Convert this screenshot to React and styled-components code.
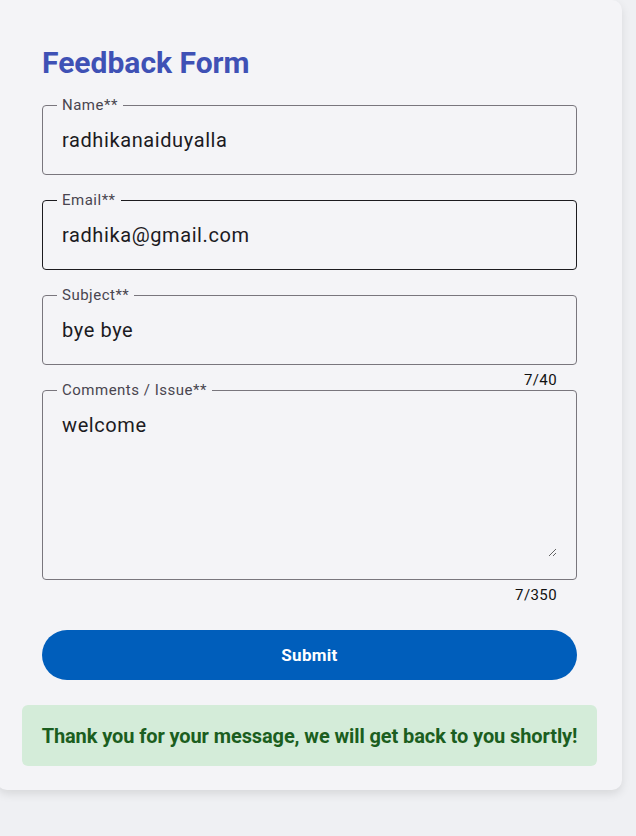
import React from 'react';
import styled, {createGlobalStyle} from 'styled-components';

const GlobalStyle = createGlobalStyle`
    html, body {
        margin: 0;
        padding: 0;
        background: #eff0f3;
        font-family: Roboto, "Liberation Sans", sans-serif;
    }
`

const Page = styled.div`
    width: 636px;
    min-height: 836px;
    overflow: hidden;
`
const Card = styled.div`
    width: 625px;
    margin-left: -3px;
    box-sizing: border-box;
    padding: 42px 45px 24px;
    background: #f4f4f7;
    border-radius: 0 10px 10px 10px;
    box-shadow: 0 4px 10px rgba(0, 0, 0, 0.1);
`
const Title = styled.h1`
    margin: 0 0 12px;
    font-size: 30px;
    line-height: 42px;
    font-weight: 700;
    color: #3f51b5;
`
const Form = styled.form`
    display: flex;
    flex-direction: column;
    gap: 16px;
`
const Field = styled.div`
    display: flex;
    flex-direction: column;
`
const Box = styled.fieldset`
    margin: 0;
    padding: 0 19px ${p => (p.$multi ? '22px' : '8px')} 14px;
    border: 1px solid ${p => (p.$focused ? '#1c1b1f' : '#79767d')};
    border-radius: 4px;
    min-width: 0;
`
const Legend = styled.legend`
    padding: 0 5px;
    font-size: 15px;
    line-height: 18px;
    letter-spacing: 0.5px;
    color: #49454f;
`
const Input = styled.input`
    display: block;
    width: 100%;
    box-sizing: border-box;
    height: 52px;
    padding: 0 5px;
    border: none;
    outline: none;
    background: transparent;
    font-family: inherit;
    font-size: 20px;
    letter-spacing: 0.6px;
    color: #1c1b1f;
`
const TextArea = styled.textarea`
    display: block;
    width: 100%;
    box-sizing: border-box;
    height: 158px;
    padding: 14px 5px 0;
    border: none;
    outline: none;
    background: transparent;
    font-family: inherit;
    font-size: 20px;
    line-height: 24px;
    letter-spacing: 0.6px;
    color: #1c1b1f;
    resize: vertical;
`
const Counter = styled.div`
    align-self: flex-end;
    margin: 6px 20px ${p => p.$pull || 0} 0;
    font-size: 15px;
    line-height: 18px;
    letter-spacing: 0.4px;
    color: #111;
`
const Submit = styled.button`
    margin-top: 10px;
    height: 50px;
    border: none;
    border-radius: 25px;
    background: #005ebb;
    color: #fff;
    font-family: inherit;
    font-size: 17px;
    font-weight: 700;
    letter-spacing: 0.3px;
    cursor: pointer;
`
const Success = styled.div`
    margin: 25px -20px 0;
    padding: 0 10px;
    height: 61px;
    display: flex;
    align-items: center;
    justify-content: center;
    border-radius: 6px;
    background: #d4ecd9;
    color: #1b5e20;
    font-size: 20px;
    font-weight: 700;
    letter-spacing: -0.1px;
`

export default function App() {
    return (
        <Page>
            <GlobalStyle />
            <Card>
                <Title>Feedback Form</Title>
                <Form onSubmit={e => e.preventDefault()}>
                    <Field>
                        <Box>
                            <Legend>Name**</Legend>
                            <Input defaultValue="radhikanaiduyalla" />
                        </Box>
                    </Field>
                    <Field>
                        <Box $focused>
                            <Legend>Email**</Legend>
                            <Input defaultValue="radhika@gmail.com" />
                        </Box>
                    </Field>
                    <Field>
                        <Box>
                            <Legend>Subject**</Legend>
                            <Input defaultValue="bye bye" />
                        </Box>
                        <Counter $pull="-24px">7/40</Counter>
                    </Field>
                    <Field>
                        <Box $multi>
                            <Legend>Comments / Issue**</Legend>
                            <TextArea defaultValue="welcome" />
                        </Box>
                        <Counter>7/350</Counter>
                    </Field>
                    <Submit type="submit">Submit</Submit>
                </Form>
                <Success>Thank you for your message, we will get back to you shortly!</Success>
            </Card>
        </Page>
    );
}
